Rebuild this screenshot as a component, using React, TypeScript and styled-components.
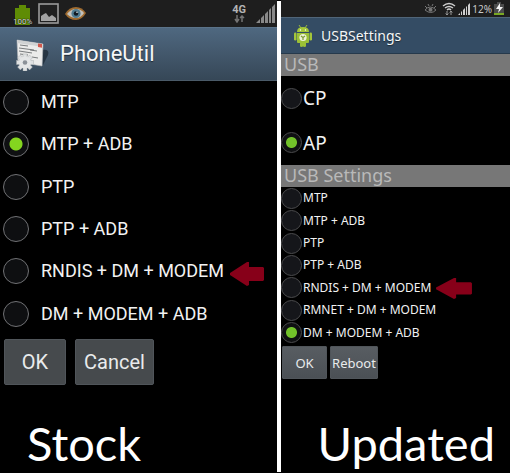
import React from "react";
import styled, { createGlobalStyle, css } from "styled-components";

const GlobalStyle = createGlobalStyle`
  *, *::before, *::after { box-sizing: border-box; }
  html, body, #root { height: 100%; }
  body { margin: 0; background: #000; color: #f2f2f2; }
`;

type Size = "large" | "small";

const Comparison = styled.main`
  display: grid;
  grid-template-columns: 277fr 4px 229fr;
  min-height: 100%;
  background: #000;
`;

const Divider = styled.div`
  margin: 1px 0;
  background: #fff;
`;

const Phone = styled.section<{ $font: string }>`
  display: flex;
  flex-direction: column;
  min-width: 0;
  font-family: ${(p) => p.$font}, sans-serif;
`;

const StatusBar = styled.div<{ $size: Size }>`
  display: flex;
  align-items: center;
  background: #1e1e1e;
  height: ${(p) => (p.$size === "large" ? 27 : 17)}px;
  padding: ${(p) => (p.$size === "large" ? "0 2px 0 13px" : "0 6px 0 0")};
  gap: ${(p) => (p.$size === "large" ? 6 : 2)}px;
  justify-content: ${(p) => (p.$size === "large" ? "flex-start" : "flex-end")};

  svg { display: block; flex: none; }
`;

const Battery = styled.div`
  display: grid;
  width: 19px;
  height: 22px;
  margin-top: 2px;

  > * { grid-area: 1 / 1; }
`;

const BatteryLabel = styled.span`
  align-self: end;
  justify-self: center;
  font: 8px/8px "Roboto", sans-serif;
  color: #ddd;
  text-shadow: 0 0 1px #000, 0 0 1px #000;
`;

const Network = styled.div`
  display: flex;
  flex-direction: column;
  align-items: center;
  margin: 0 4px 0 auto;
  font: bold 11px/10px "Roboto", sans-serif;
  color: #b4b4b4;
`;

const Percent = styled.span`
  font: 10px/14px "Noto Sans", sans-serif;
  color: #c8c8c8;
`;

const Header = styled.header<{ $size: Size }>`
  display: flex;
  align-items: center;
  ${(p) =>
    p.$size === "large"
      ? css`
          height: 54px;
          padding-left: 15px;
          gap: 9px;
          background: linear-gradient(#4f6880, #364757);
          border-top: 1px solid #5b7389;
          border-bottom: 1px solid #4a5a68;
        `
      : css`
          height: 37px;
          padding-left: 12px;
          gap: 8px;
          background: #344c64;
          border-top: 1px solid #506578;
          border-bottom: 1px solid #26394b;
        `}
`;

const Title = styled.h1<{ $size: Size }>`
  margin: 0;
  font-weight: 400;
  font-size: ${(p) => (p.$size === "large" ? 22 : 14)}px;
  line-height: 28px;
  color: #f5f7f8;
  text-shadow: 0 1px 1px #1c2834;
`;

const SectionTitle = styled.h2`
  margin: 0;
  padding-left: 3px;
  height: 22px;
  background: #777;
  color: #b9b9b9;
  font-weight: 400;
  font-size: 18px;
  line-height: 21px;
`;

const Options = styled.div<{ $height: number }>`
  display: grid;
  grid-auto-rows: 1fr;
  min-height: ${(p) => p.$height}px;
`;

const OptionRow = styled.div`
  display: flex;
  align-items: center;
  min-width: 0;
`;

const OptionLabel = styled.label<{ $size: Size; $text: number }>`
  display: flex;
  align-items: center;
  white-space: nowrap;
  padding-left: ${(p) => (p.$size === "large" ? 3 : 0)}px;
  gap: ${(p) => (p.$size === "large" ? 12 : 1)}px;
  font-size: ${(p) => p.$text}px;
  line-height: 20px;
`;

const Radio = styled.input<{ $size: Size }>`
  appearance: none;
  flex: none;
  margin: 0;
  width: ${(p) => (p.$size === "large" ? 26 : 21)}px;
  height: ${(p) => (p.$size === "large" ? 26 : 21)}px;
  border: 1px solid ${(p) => (p.$size === "large" ? "#707174" : "#4b4b4d")};
  border-radius: 50%;
  background: ${(p) => (p.$size === "large" ? "#0e0f11" : "#15161a")};

  &:checked {
    background: radial-gradient(
      circle,
      ${(p) => (p.$size === "large" ? "#84d61f 0 6px, #0f1012 7px" : "#72c22a 0 5px, #0f1012 6px")}
    );
  }
`;

const Actions = styled.div<{ $size: Size }>`
  display: flex;
  padding: ${(p) => (p.$size === "large" ? "4px 4px 0" : "2px 1px 0")};
  gap: ${(p) => (p.$size === "large" ? 9 : 3)}px;
`;

const ActionButton = styled.button<{ $size: Size; $width: number }>`
  min-width: ${(p) => p.$width}px;
  height: ${(p) => (p.$size === "large" ? 46 : 33)}px;
  padding: 0;
  border: 1px solid #50555a;
  border-radius: ${(p) => (p.$size === "large" ? 2 : 1)}px;
  background: ${(p) =>
    p.$size === "large" ? "#464a4d" : "linear-gradient(#585d62, #4b5055)"};
  color: #e9ebec;
  font-family: inherit;
  font-size: ${(p) => (p.$size === "large" ? 20 : 13)}px;
`;

const Caption = styled.p<{ $align: "left" | "right" }>`
  margin: auto 0 0;
  padding: 0 15px 0 27px;
  text-align: ${(p) => p.$align};
  font: 47px/60px "Lato", sans-serif;
  color: #fff;
`;

const ArrowSvg = styled.svg<{ $size: Size }>`
  flex: none;
  margin-left: ${(p) => (p.$size === "large" ? 5 : 4)}px;
  margin-top: ${(p) => (p.$size === "large" ? 5 : 0)}px;
`;

function Arrow({ size }: { size: Size }) {
  const large = size === "large";
  return (
    <ArrowSvg $size={size} width={large ? 36 : 38} height={large ? 25 : 22} viewBox="0 0 36 25" preserveAspectRatio="none" aria-hidden="true">
      <path d="M1 12 18 1 20 1V6H34L35 7V19L34 20H20V24L18 25 1 14Z" fill="#870019" />
    </ArrowSvg>
  );
}

interface OptionListProps {
  name: string;
  size: Size;
  text: number;
  height: number;
  items: string[];
  selected: string;
  marked?: string;
}

function OptionList({ name, size, text, height, items, selected, marked }: OptionListProps) {
  return (
    <Options $height={height} role="radiogroup" aria-label={name}>
      {items.map((item) => (
        <OptionRow key={item}>
          <OptionLabel $size={size} $text={text}>
            <Radio $size={size} type="radio" name={name} defaultChecked={item === selected} />
            {item}
          </OptionLabel>
          {item === marked && <Arrow size={size} />}
        </OptionRow>
      ))}
    </Options>
  );
}

function BatteryIcon() {
  return (
    <Battery>
      <svg width="19" height="22" viewBox="0 0 19 22" aria-hidden="true">
        <path d="M6 1h7v3h4v17H2V4h4Z" fill="#5f8c05" />
      </svg>
      <BatteryLabel>100%</BatteryLabel>
    </Battery>
  );
}

function PictureIcon() {
  return (
    <svg width="21" height="21" viewBox="0 0 21 21" aria-hidden="true">
      <rect x="1" y="1" width="19" height="19" fill="#202020" stroke="#9b9b9b" strokeWidth="1.6" />
      <path d="M3 18v-5l3-2 2-1 3 4 3-2 4 3v3Z" fill="#a3a3a3" />
    </svg>
  );
}

function EyeIcon() {
  return (
    <svg width="21" height="16" viewBox="0 0 21 16" aria-hidden="true">
      <path d="M0 8Q4 1 11 1q6 0 10 6-4 7-10 7Q4 14 0 8Z" fill="#a06c30" />
      <path d="M2 8q4-5 9-5t8 4q-3 5-8 5T2 8Z" fill="#c3c1bb" />
      <circle cx="11" cy="7.5" r="4.6" fill="#4f7c91" />
      <circle cx="11" cy="7.5" r="2.3" fill="#101a22" />
      <circle cx="12" cy="6.3" r=".8" fill="#e4edf0" />
    </svg>
  );
}

function DataArrows() {
  return (
    <svg width="11" height="8" viewBox="0 0 11 8" aria-hidden="true">
      <path d="M3 0v6M1 4l2 3 2-3M8 7V1M6 3l2-2 2 2" fill="none" stroke="#747474" strokeWidth="1.5" />
    </svg>
  );
}

function StockSignal() {
  return (
    <svg width="19" height="19" viewBox="0 0 19 19" aria-hidden="true">
      <path d="M0 19 4 15v4ZM5 14l3-3v8H5ZM9 10l3-3v12H9ZM13 6l2-2v15h-2ZM16 3l3-3v19h-3Z" fill="#898989" />
    </svg>
  );
}

function UpdatedSignal() {
  return (
    <svg width="12" height="12" viewBox="0 0 12 12" aria-hidden="true">
      <path d="M0 12 2 10v2ZM3 9l1-1v4H3ZM5 7l2-2v7H5ZM8 4l1-1v9H8ZM10 2l2-2v12h-2Z" fill="#cfcfcf" />
    </svg>
  );
}

const SmartStaySvg = styled.svg`
  margin-right: 3px;
`;

function SmartStayIcon() {
  return (
    <SmartStaySvg width="13" height="11" viewBox="0 0 13 11" aria-hidden="true">
      <path d="M1 7q5-6 11 0-5 5-11 0M1 3l2 2M4 1l1 2M9 1 8 3M12 3l-2 2" fill="none" stroke="#777" />
      <circle cx="6.5" cy="6.7" r="2" fill="#777" />
    </SmartStaySvg>
  );
}

function WifiIcon() {
  return (
    <svg width="14" height="14" viewBox="0 0 14 14" aria-hidden="true">
      <path d="M1 4q6-5 12 0M3 6q4-3 8 0M5 8q2-2 4 0" fill="none" stroke="#d0d0d0" strokeWidth="1.5" />
      <path d="M5 9v4M3.7 11.5 5 13l1.3-1.500M9 13V9M7.700 10.500 9 9l1.300 1.500" fill="none" stroke="#999" />
    </svg>
  );
}

function ChargingIcon() {
  return (
    <svg width="10" height="13" viewBox="0 0 10 13" aria-hidden="true">
      <path d="M3 0h4v2h3v11H0V2h3Z" fill="#4b4b4b" />
      <path d="M0 11h10v2H0Z" fill="#79a823" />
      <path d="M6 1 2 7h3L4 11l5-6H6Z" fill="#f2f2f2" />
    </svg>
  );
}

function PhoneUtilIcon() {
  const teeth = [0, 45, 90, 135, 180, 225, 270, 315];
  return (
    <svg width="36" height="34" viewBox="0 0 36 34" aria-hidden="true">
      <path d="M27 13q8-1 6 5l-5 10Z" fill="#1d2935" opacity=".75" />
      <path d="m2 3 26 4-1 22L3 25Z" fill="#ebebea" stroke="#b9bbbc" strokeWidth=".6" />
      <path d="m2 3 26 4v3L2 6Z" fill="#d0d2d3" />
      <path d="m23 6.500 4 .6v3.600l-4-.6Z" fill="#d2584c" />
      <path d="m5 8 8 1M4 11l15 2M4 14l13 2M5 17l8 1M15 13l7 1M17 20l6 1" stroke="#6b6e70" strokeWidth=".9" />
      <g fill="#dfe1e2" stroke="#a2a6a9" strokeWidth=".4">
        {teeth.map((angle) => (
          <rect key={angle} x="8" y="17" width="4" height="5" transform={`rotate(${angle} 10 25.500)`} />
        ))}
      </g>
      <circle cx="10" cy="25.500" r="6" fill="#e4e6e7" />
      <circle cx="10" cy="25.500" r="2.300" fill="#8b9198" />
    </svg>
  );
}

function AndroidIcon() {
  return (
    <svg width="20" height="22" viewBox="0 0 20 22" aria-hidden="true">
      <path d="m6 0 2 3M14 0l-2 3" stroke="#a4c639" strokeWidth=".9" />
      <path d="M4 7q0-5 6-5t6 5Z" fill="#a4c639" />
      <path d="M4 8h12v9q0 1-1 1h-2v3q0 1-1.500 1T10 21v-3 3q0 1-1.500 1T7 21v-3H5q-1 0-1-1Z" fill="#9cc036" />
      <rect x="1" y="7.500" width="2.500" height="8" rx="1.200" fill="#a4c639" />
      <rect x="16.500" y="7.500" width="2.500" height="8" rx="1.200" fill="#a4c639" />
      <circle cx="7.500" cy="5" r=".7" fill="#fff" />
      <circle cx="12.500" cy="5" r=".7" fill="#fff" />
      <circle cx="10" cy="12.500" r="3.600" fill="#eef2d8" />
      <path d="M10 12.500V15M10 12.500 8 11M10 12.500l2-1.500" stroke="#7e9b33" strokeWidth="1.200" />
    </svg>
  );
}

export default function App() {
  return (
    <>
      <GlobalStyle />
      <Comparison>
        <Phone $font="Roboto">
          <StatusBar $size="large">
            <BatteryIcon />
            <PictureIcon />
            <EyeIcon />
            <Network>
              4G
              <DataArrows />
            </Network>
            <StockSignal />
          </StatusBar>
          <Header $size="large">
            <PhoneUtilIcon />
            <Title $size="large">PhoneUtil</Title>
          </Header>
          <OptionList
            name="Stock USB mode"
            size="large"
            text={18}
            height={254}
            items={["MTP", "MTP + ADB", "PTP", "PTP + ADB", "RNDIS + DM + MODEM", "DM + MODEM + ADB"]}
            selected="MTP + ADB"
            marked="RNDIS + DM + MODEM"
          />
          <Actions $size="large">
            <ActionButton type="button" $size="large" $width={62}>OK</ActionButton>
            <ActionButton type="button" $size="large" $width={79}>Cancel</ActionButton>
          </Actions>
          <Caption $align="left">Stock</Caption>
        </Phone>
        <Divider />
        <Phone $font="'Noto Sans'">
          <StatusBar $size="small">
            <SmartStayIcon />
            <WifiIcon />
            <UpdatedSignal />
            <Percent>12%</Percent>
            <ChargingIcon />
          </StatusBar>
          <Header $size="small">
            <AndroidIcon />
            <Title $size="small">USBSettings</Title>
          </Header>
          <SectionTitle>USB</SectionTitle>
          <OptionList name="USB" size="small" text={19} height={89} items={["CP", "AP"]} selected="AP" />
          <SectionTitle>USB Settings</SectionTitle>
          <OptionList
            name="USB Settings"
            size="small"
            text={12}
            height={157}
            items={["MTP", "MTP + ADB", "PTP", "PTP + ADB", "RNDIS + DM + MODEM", "RMNET + DM + MODEM", "DM + MODEM + ADB"]}
            selected="DM + MODEM + ADB"
            marked="RNDIS + DM + MODEM"
          />
          <Actions $size="small">
            <ActionButton type="button" $size="small" $width={45}>OK</ActionButton>
            <ActionButton type="button" $size="small" $width={48}>Reboot</ActionButton>
          </Actions>
          <Caption $align="right">Updated</Caption>
        </Phone>
      </Comparison>
    </>
  );
}
